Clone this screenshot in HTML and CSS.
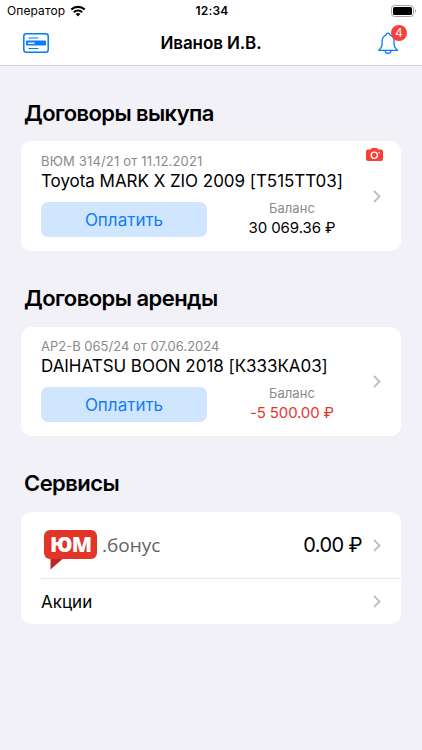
FILE: index.html
```html
<!DOCTYPE html>
<html lang="ru">
<head>
	<meta charset="utf-8">
	<meta name="viewport" content="width=device-width, initial-scale=1.0">
	<title>Иванов И.В.</title>
	<link rel="stylesheet" href="styles.css">
</head>
<body>
	<header class="header">
		<div class="status">
			<div class="carrier">
				<span>Оператор</span>
				<svg width="16" height="12" viewBox="0 0 16 12" fill="none" stroke="#000" stroke-width="2.1">
					<path d="M1.3 4.6a9.6 9.6 0 0 1 13.4 0"/>
					<path d="M3.8 7.2a6 6 0 0 1 8.4 0"/>
					<path d="M8 11.4L5.7 9.1a3.3 3.3 0 0 1 4.6 0z" fill="#000" stroke="none"/>
				</svg>
			</div>
			<div class="time">12:34</div>
			<div class="battery">
				<svg width="26" height="12" viewBox="0 0 26 12">
					<rect x=".5" y=".5" width="22" height="11" rx="3" fill="none" stroke="#a3a3a3"/>
					<rect x="2" y="2" width="19" height="8" rx="1.5" fill="#000"/>
					<path d="M24 4v4c1.2-.6 1.2-3.4 0-4z" fill="#999"/>
				</svg>
			</div>
		</div>
		<nav class="nav">
			<svg class="card-icon" width="26" height="20" viewBox="0 0 26 20">
				<rect x=".8" y=".8" width="24.4" height="18.4" rx="2.4" fill="none" stroke="#087bea" stroke-width="1.5"/>
				<path d="M5.500 5h10M5.500 15.500h10" stroke="#087bea" stroke-width="1"/>
				<rect x="3" y="7.600" width="20" height="5" rx="1" fill="#087bff"/>
				<path d="M5 10.200h6.500" stroke="#fff" stroke-width="1.400"/>
			</svg>
			<h1>Иванов И.В.</h1>
			<div class="bell">
				<svg width="22" height="24" viewBox="0 0 22 24" fill="none" stroke="#087bff" stroke-width="1.3" stroke-linejoin="round">
					<path d="M1.700 19.300c2.400-1.800 3.400-3.200 3.400-6.800v-2c0-3.500 1.500-5.700 4.100-6.400 0-1.300.7-2 1.900-2s1.900.7 1.900 2c2.600.7 4.100 2.900 4.100 6.400v2c0 3.600 1 5 3.400 6.800z"/>
					<path d="M8 19.500c.3 1.900 1.400 3 3.100 3s2.800-1.100 3.100-3"/>
				</svg>
				<span class="badge">4</span>
			</div>
		</nav>
	</header>

	<main class="content">
		<h2>Договоры выкупа</h2>
		<section class="card contract">
			<div class="info">
				<div class="number wide">ВЮМ 314/21 от 11.12.2021</div>
				<div class="car">Toyota MARK X ZIO 2009 [T515TT03]</div>
				<div class="row">
					<button class="pay">Оплатить</button>
					<div class="balance">
						<span class="label">Баланс</span>
						<span class="sum">30 069.36 ₽</span>
					</div>
				</div>
			</div>
			<svg class="camera" width="17" height="13" viewBox="0 0 17 13">
				<path d="M2 1.500h2.600L5.700.4Q6 0 6.500 0h4q.5 0 .8.400l1.100 1.100H15q2 0 2 2V11q0 2-2 2H2q-2 0-2-2V3.500q0-2 2-2z" fill="#fb3e36"/>
				<circle cx="8.300" cy="7.200" r="3.100" fill="none" stroke="#fff" stroke-width="1.300"/>
				<circle cx="13.200" cy="4.700" r=".8" fill="#fff"/>
			</svg>
			<svg class="arrow" width="8" height="13" viewBox="0 0 8 13"><path d="M1 1l5.600 5.500L1 12"/></svg>
		</section>

		<h2 class="next">Договоры аренды</h2>
		<section class="card contract second">
			<div class="info">
				<div class="number">АР2-В 065/24 от 07.06.2024</div>
				<div class="car">DAIHATSU BOON 2018 [К333КА03]</div>
				<div class="row">
					<button class="pay">Оплатить</button>
					<div class="balance">
						<span class="label">Баланс</span>
						<span class="sum debt">-5 500.00 ₽</span>
					</div>
				</div>
			</div>
			<svg class="arrow" width="8" height="13" viewBox="0 0 8 13"><path d="M1 1l5.600 5.500L1 12"/></svg>
		</section>

		<h2 class="next">Сервисы</h2>
		<section class="card services">
			<div class="service bonus">
				<div class="logo">
					<span>ЮМ</span>
					<svg width="13" height="11" viewBox="0 0 13 11"><path d="M.5 0v10.500L12.500 0z" fill="#b92a22"/></svg>
				</div>
				<span class="bonus-name">.бонус</span>
				<span class="bonus-sum">0.00 ₽</span>
				<svg class="arrow" width="8" height="13" viewBox="0 0 8 13"><path d="M1 1l5.600 5.500L1 12"/></svg>
			</div>
			<div class="service promo">
				<span>Акции</span>
				<svg class="arrow" width="8" height="13" viewBox="0 0 8 13"><path d="M1 1l5.600 5.500L1 12"/></svg>
			</div>
		</section>
	</main>
</body>
</html>
```
FILE: styles.css
```css
*{
	margin: 0;
	padding: 0;
	box-sizing: border-box;
}
body{
	min-height: 750px;
	background-color: #f2f1f7;
	font-family: Inter, "Liberation Sans", sans-serif;
	color: #000;
}
svg{
	display: block;
	flex: none;
}
.header{
	height: 66px;
	background-color: #fff;
	border-bottom: 1px solid #d0d0d4;
}
.status{
	height: 21px;
	padding: 0 5px 0 7px;
	display: grid;
	grid-template-columns: 1fr auto 1fr;
	align-items: center;
	font-size: 12px;
}
.carrier{
	display: flex;
	align-items: center;
	gap: 5px;
	letter-spacing: .1px;
}
.time{
	font-weight: 600;
	letter-spacing: .2px;
}
.battery{
	justify-self: end;
}
.nav{
	height: 44px;
	padding: 0 23px;
	display: grid;
	grid-template-columns: 1fr auto 1fr;
	align-items: center;
}
h1{
	font-size: 17px;
	font-weight: 600;
	letter-spacing: -.1px;
}
.bell{
	position: relative;
	justify-self: end;
}
.badge{
	position: absolute;
	left: 14px;
	top: -6px;
	width: 16px;
	height: 16px;
	border-radius: 50%;
	background-color: #fb3e36;
	color: #fff;
	font-size: 12px;
	line-height: 16px;
	text-align: center;
}
.content{
	padding: 0 21px;
}
h2{
	padding: 33px 3px 14px;
	font-size: 22px;
	line-height: 28px;
	font-weight: 600;
	letter-spacing: -.6px;
}
.next{
	padding-top: 33px;
	padding-bottom: 15px;
	letter-spacing: -.55px;
}
.card{
	position: relative;
	background-color: #fff;
	border-radius: 10px;
}
.contract{
	height: 110px;
	padding: 12px 20px 0;
	display: flex;
	justify-content: space-between;
}
.second{
	height: 109px;
	padding-top: 11px;
}
.arrow{
	fill: none;
	stroke: #bebec1;
	stroke-width: 1.8;
}
.contract .arrow{
	margin-top: 37px;
}
.info{
	width: 330px;
}
.number{
	font-size: 13px;
	line-height: 17px;
	color: #8a8a8e;
	white-space: nowrap;
}
.wide{
	letter-spacing: .17px;
}
.car{
	font-size: 17px;
	line-height: 22px;
	letter-spacing: -.04px;
	white-space: nowrap;
}
.row{
	display: flex;
	margin-top: 10px;
}
.pay{
	flex: none;
	width: 166px;
	height: 35px;
	border: 0;
	border-radius: 7px;
	background-color: #d0e6ff;
	color: #147cf5;
	font-family: inherit;
	font-size: 17px;
}
.balance{
	width: 158px;
	margin-top: -3px;
	margin-left: 6px;
	display: flex;
	flex-direction: column;
	align-items: center;
}
.label{
	font-size: 13px;
	line-height: 18px;
	letter-spacing: .1px;
	color: #8a8a8e;
}
.sum{
	font-size: 15px;
	line-height: 21px;
	letter-spacing: -.1px;
}
.debt{
	letter-spacing: -.15px;
	color: #e8352c;
}
.camera{
	position: absolute;
	right: 18px;
	top: 7px;
}
.services{
	height: 112px;
	padding-left: 20px;
}
.service{
	padding-right: 20px;
	display: flex;
	align-items: center;
}
.bonus{
	height: 67px;
	padding-left: 3px;
	border-bottom: 1px solid #e6e6e8;
}
.promo{
	height: 45px;
	justify-content: space-between;
	font-size: 17px;
}
.logo{
	width: 53px;
	margin-top: 9px;
}
.logo span{
	display: block;
	height: 29px;
	border-radius: 6px;
	background-color: #e03527;
	color: #fff;
	font-family: "Open Sans", sans-serif;
	font-size: 21px;
	line-height: 28px;
	font-weight: 800;
	letter-spacing: -1px;
	text-align: center;
}
.logo svg{
	margin-left: 6px;
}
.bonus-name{
	margin-left: 5px;
	font-family: "Open Sans", sans-serif;
	font-size: 19px;
	color: #636363;
}
.bonus-sum{
	margin-left: auto;
	margin-right: 11px;
	font-size: 20px;
	letter-spacing: -.6px;
}
```
